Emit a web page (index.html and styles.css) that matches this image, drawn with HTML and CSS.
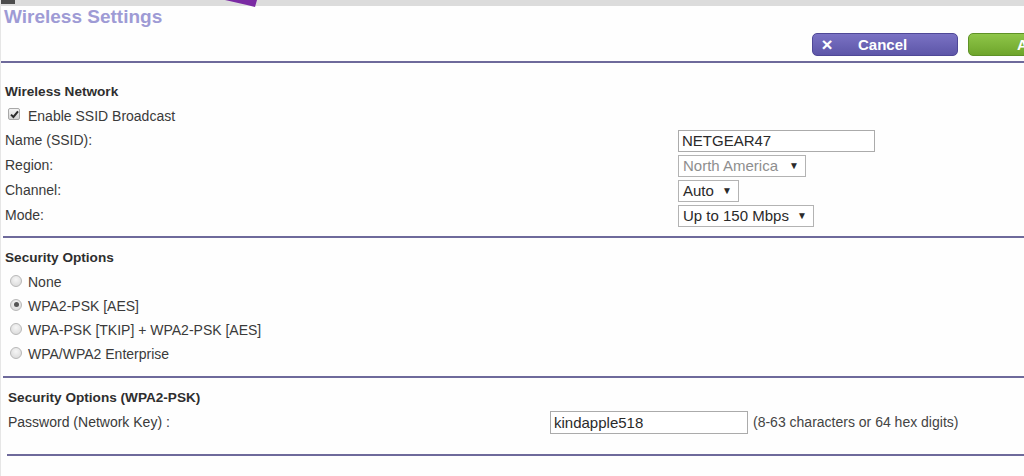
FILE: index.html
```html
<!DOCTYPE html>
<html lang="en">
<head>
<meta charset="utf-8">
<title>Wireless Settings</title>
<link rel="stylesheet" href="styles.css">
</head>
<body>
<div class="page">
  <div class="topstrip">
    <span class="strip-tab"></span>
    <svg class="strip-arrow" width="34" height="8" viewBox="0 0 34 8"><polygon points="0,0 32,0 30,7 22,5" fill="#7a2aa3"/></svg>
  </div>
  <h1 class="title">Wireless Settings</h1>
  <div class="actions">
    <button class="btn btn-cancel"><span class="btn-x">&times;</span><span class="btn-label">Cancel</span></button>
    <button class="btn btn-apply"><span class="btn-label">Apply</span></button>
  </div>
  <div class="rule-top"></div>

  <section class="section sec-network">
    <div class="row row-head"><span class="heading">Wireless Network</span></div>
    <div class="row row-check"><span class="checkbox"><svg width="9" height="9" viewBox="0 0 9 9"><path d="M1 4.6 L3.4 7 L8 1.4" fill="none" stroke="#2b2b2b" stroke-width="2"/></svg></span><span>Enable SSID Broadcast</span></div>
    <div class="row form-row"><span class="label">Name (SSID):</span><div class="field"><span class="textbox tb-ssid">NETGEAR47</span></div></div>
    <div class="row form-row"><span class="label">Region:</span><div class="field"><span class="select sel-region disabled"><span>North America</span><span class="arrow">&#9660;</span></span></div></div>
    <div class="row form-row"><span class="label">Channel:</span><div class="field"><span class="select sel-channel"><span>Auto</span><span class="arrow">&#9660;</span></span></div></div>
    <div class="row form-row"><span class="label">Mode:</span><div class="field"><span class="select sel-mode"><span>Up to 150 Mbps</span><span class="arrow">&#9660;</span></span></div></div>
  </section>

  <section class="section sec-security">
    <div class="row row-head"><span class="heading">Security Options</span></div>
    <div class="row row-radio"><span class="radio"></span><span>None</span></div>
    <div class="row row-radio"><span class="radio checked"></span><span>WPA2-PSK [AES]</span></div>
    <div class="row row-radio"><span class="radio"></span><span>WPA-PSK [TKIP] + WPA2-PSK [AES]</span></div>
    <div class="row row-radio"><span class="radio"></span><span>WPA/WPA2 Enterprise</span></div>
  </section>

  <section class="section sec-psk">
    <div class="row row-head"><span class="heading">Security Options (WPA2-PSK)</span></div>
    <div class="row pw-row"><span class="label">Password (Network Key) :</span><div class="field"><span class="textbox tb-pass">kindapple518</span><span class="hint">(8-63 characters or 64 hex digits)</span></div></div>
  </section>
</div>
</body>
</html>
```

FILE: styles.css
```css
html, body {
  margin: 0;
  padding: 0;
  background: #fefefe;
}
body {
  font-family: "Liberation Sans", Arial, sans-serif;
  color: #3a3a3a;
  overflow: hidden;
  width: 1024px;
  height: 476px;
}
.page {
  position: relative;
  width: 1024px;
  height: 476px;
  overflow: hidden;
  border-left: 1px solid #e6e6e6;
  box-sizing: border-box;
}
.topstrip {
  position: relative;
  height: 6px;
  background: #dcdcdc;
}
.strip-tab {
  position: absolute;
  left: 0;
  top: 0;
  width: 14px;
  height: 4px;
  background: #4d4d4d;
}
.strip-arrow {
  position: absolute;
  left: 224px;
  top: 0;
}
.title {
  margin: 0;
  padding-left: 3px;
  font-size: 19px;
  line-height: 22px;
  font-weight: bold;
  color: #9e9bd5;
}
.actions {
  display: flex;
  justify-content: flex-end;
  gap: 10px;
  margin-top: 5px;
  height: 23px;
}
.btn {
  display: flex;
  align-items: center;
  flex: none;
  height: 23px;
  border-radius: 5px;
  padding: 0;
  font-family: "Liberation Sans", Arial, sans-serif;
  font-weight: bold;
  font-size: 15px;
  color: #fff;
  box-sizing: border-box;
}
.btn-cancel {
  width: 146px;
  background: linear-gradient(#7a72c4, #5d56a8);
  border: 1px solid #4f4897;
  padding-left: 8px;
}
.btn-x {
  font-size: 19px;
  line-height: 19px;
  width: 12px;
  margin-right: 25px;
  font-weight: bold;
}
.btn-apply {
  width: 96px;
  margin-right: -40px;
  background: linear-gradient(#8fc649, #6ea52b);
  border: 1px solid #5f9227;
  padding-left: 48px;
}
.rule-top {
  margin-top: 5px;
  height: 2px;
  background: #6e6a9b;
}
.section {
  border-bottom: 2px solid #6e6a9b;
  font-size: 14px;
}
.row {
  display: flex;
  align-items: center;
  height: 25px;
  line-height: 25px;
  white-space: nowrap;
}
.heading {
  font-weight: bold;
  font-size: 13.6px;
  color: #2e2e2e;
}
.sec-network {
  margin-left: 2px;
  padding: 16px 0 8px 2px;
}
.sec-network .row-check {
  height: 24px;
}
.form-row .label {
  width: 673px;
  flex: none;
}
.field {
  display: flex;
  align-items: center;
}
.checkbox {
  display: inline-flex;
  align-items: center;
  justify-content: center;
  width: 12px;
  height: 12px;
  margin: -4px 8px 0 3px;
  border: 1px solid #a8a8a8;
  border-radius: 2px;
  background: linear-gradient(#f4f4f4, #d4d4d4);
  box-sizing: border-box;
}
.textbox {
  display: inline-block;
  height: 22px;
  line-height: 20px;
  border: 1px solid #ababab;
  box-sizing: border-box;
  padding-left: 3px;
  font-size: 15px;
  color: #2a2a2a;
  background: #fff;
}
.tb-ssid {
  width: 197px;
}
.select {
  display: flex;
  align-items: center;
  justify-content: space-between;
  height: 22px;
  line-height: 20px;
  border: 1px solid #b3b3b3;
  box-sizing: border-box;
  padding: 0 6px 0 4px;
  font-size: 15px;
  color: #2a2a2a;
  background: #fff;
}
.select.disabled {
  color: #8e8e8e;
}
.select.disabled .arrow {
  color: #2a2a2a;
}
.arrow {
  font-size: 10px;
}
.sel-region { width: 128px; }
.sel-channel { width: 61px; }
.sel-mode { width: 136px; }

.sec-security {
  margin-left: 2px;
  padding: 7px 0 10px 2px;
}
.row-radio {
  height: 24px;
}
.radio {
  display: inline-block;
  width: 12px;
  height: 12px;
  margin: -3px 6px 0 5px;
  border-radius: 50%;
  border: 1px solid #b8b8b8;
  box-sizing: border-box;
  background: radial-gradient(circle at 50% 35%, #f6f6f6, #d6d6d6);
  position: relative;
}
.radio.checked::after {
  content: "";
  position: absolute;
  left: 2.5px;
  top: 2.5px;
  width: 5px;
  height: 5px;
  border-radius: 50%;
  background: #555;
}
.sec-psk {
  margin-left: 6px;
  padding: 7px 0 19px 1px;
}
.pw-row .label {
  width: 542px;
  flex: none;
}
.tb-pass {
  width: 198px;
  height: 23px;
  line-height: 21px;
}
.hint {
  margin-left: 5px;
  color: #444;
}
```
